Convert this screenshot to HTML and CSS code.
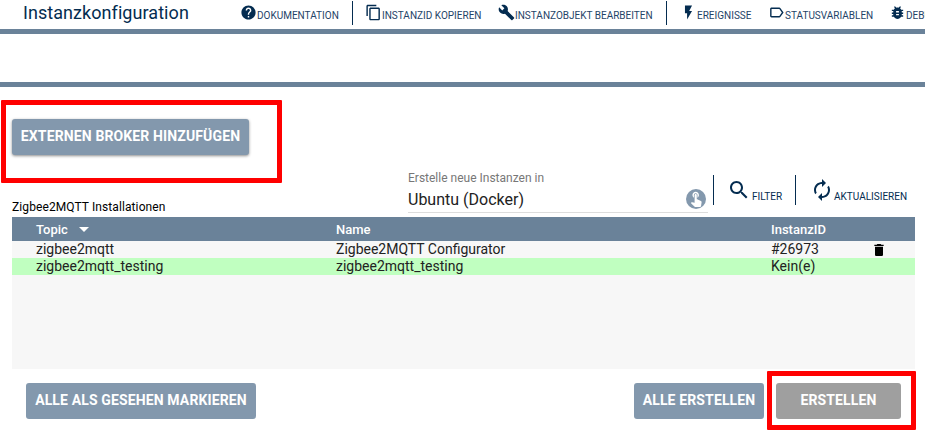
FILE: index.html
```html
<!DOCTYPE html>
<html lang="de">
<head>
<meta charset="utf-8">
<title>Instanzkonfiguration</title>
<link rel="stylesheet" href="styles.css">
</head>
<body>
<header class="topbar">
  <h1 class="title">Instanzkonfiguration</h1>
  <a class="tool"><svg class="icon" viewBox="0 0 24 24"><path d="M12 2C6.48 2 2 6.48 2 12s4.48 10 10 10 10-4.48 10-10S17.52 2 12 2zm1 17h-2v-2h2v2zm2.07-7.75l-.9.92C13.45 12.9 13 13.5 13 15h-2v-.5c0-1.1.45-2.1 1.17-2.83l1.24-1.26c.37-.36.59-.86.59-1.41 0-1.1-.9-2-2-2s-2 .9-2 2H8c0-2.21 1.79-4 4-4s4 1.79 4 4c0 .88-.36 1.68-.93 2.25z"/></svg><span class="caption">DOKUMENTATION</span></a>
  <span class="divider"></span>
  <a class="tool"><svg class="icon" viewBox="0 0 24 24"><path d="M16 1H4c-1.1 0-2 .9-2 2v14h2V3h12V1zm3 4H8c-1.1 0-2 .9-2 2v14c0 1.1.9 2 2 2h11c1.1 0 2-.9 2-2V7c0-1.1-.9-2-2-2zm0 16H8V7h11v14z"/></svg><span class="caption">INSTANZID KOPIEREN</span></a>
  <a class="tool"><svg class="icon" viewBox="0 0 24 24"><path d="M22.7 19l-9.1-9.1c.9-2.3.4-5-1.5-6.9-2-2-5-2.4-7.4-1.3L9 6 6 9 1.6 4.7C.4 7.1.9 10.1 2.9 12.1c1.9 1.9 4.6 2.4 6.9 1.5l9.1 9.1c.4.4 1 .4 1.4 0l2.3-2.3c.5-.4.5-1.1.1-1.4z"/></svg><span class="caption">INSTANZOBJEKT BEARBEITEN</span></a>
  <span class="divider"></span>
  <a class="tool"><svg class="icon" viewBox="0 0 24 24"><path d="M7 2v11h3v9l7-12h-4l4-8z"/></svg><span class="caption">EREIGNISSE</span></a>
  <a class="tool"><svg class="icon" viewBox="0 0 24 24"><path d="M17.63 5.84C17.27 5.33 16.67 5 16 5L5 5.01C3.9 5.01 3 5.9 3 7v10c0 1.1.9 1.99 2 1.99L16 19c.67 0 1.27-.33 1.63-.84L22 12l-4.37-6.16zM16 17H5V7h11l3.55 5L16 17z"/></svg><span class="caption">STATUSVARIABLEN</span></a>
  <a class="tool"><svg class="icon" viewBox="0 0 24 24"><path d="M20 8h-2.81c-.45-.78-1.07-1.45-1.82-1.96L17 4.41 15.59 3l-2.17 2.17C12.96 5.06 12.49 5 12 5c-.49 0-.96.06-1.41.17L8.41 3 7 4.41l1.62 1.63C7.88 6.55 7.26 7.22 6.81 8H4v2h2.09c-.05.33-.09.66-.09 1v1H4v2h2v1c0 .34.04.67.09 1H4v2h2.81c1.04 1.79 2.97 3 5.19 3s4.15-1.21 5.19-3H20v-2h-2.09c.05-.33.09-.66.09-1v-1h2v-2h-2v-1c0-.34-.04-.67-.09-1H20V8zm-6 8h-4v-2h4v2zm0-4h-4v-2h4v2z"/></svg><span class="caption">DEBUG</span></a>
</header>
<div class="strip"></div>
<main class="content">
  <div class="broker-row">
    <button class="btn raised">EXTERNEN BROKER HINZUFÜGEN</button>
    <span class="mark mark-broker"></span>
  </div>
  <div class="list-head">
    <span class="list-title">Zigbee2MQTT Installationen</span>
    <div class="select">
      <span class="select-label">Erstelle neue Instanzen in</span>
      <div class="select-value"><span>Ubuntu (Docker)</span><svg class="touch" viewBox="0 0 20 20"><circle cx="10" cy="10" r="10"/><path transform="translate(1.4 .6) scale(.72)" d="M9 11.24V7.5C9 6.12 10.12 5 11.5 5S14 6.12 14 7.5v3.74c1.21-.81 2-2.18 2-3.74C16 5.01 13.99 3 11.5 3S7 5.01 7 7.5c0 1.56.79 2.93 2 3.74zm9.84 4.63l-4.54-2.26c-.17-.07-.35-.11-.54-.11H13v-6c0-.83-.67-1.5-1.5-1.5S10 6.67 10 7.5v10.74l-3.43-.72c-.08-.01-.15-.03-.24-.03-.31 0-.59.13-.79.33l-.79.8 4.94 4.94c.27.27.65.44 1.06.44h6.79c.75 0 1.33-.55 1.44-1.28l.75-5.27c.01-.07.02-.14.02-.2 0-.62-.38-1.16-.91-1.38z"/></svg></div>
    </div>
    <a class="action filter"><svg viewBox="0 0 24 24"><path d="M15.5 14h-.79l-.28-.27C15.41 12.59 16 11.11 16 9.5 16 5.91 13.09 3 9.5 3S3 5.91 3 9.5 5.91 16 9.5 16c1.61 0 3.09-.59 4.23-1.57l.27.28v.79l5 4.99L20.49 19l-4.99-5zm-6 0C7.01 14 5 11.99 5 9.5S7.01 5 9.5 5 14 7.01 14 9.5 11.99 14 9.5 14z"/></svg><span class="action-text">FILTER</span></a>
    <a class="action refresh"><svg viewBox="0 0 24 24"><path d="M12 6v3l4-4-4-4v3c-4.42 0-8 3.58-8 8 0 1.57.46 3.03 1.24 4.26L6.7 14.8c-.45-.83-.7-1.79-.7-2.8 0-3.31 2.69-6 6-6zm6.76 1.74L17.3 9.2c.44.84.7 1.79.7 2.8 0 3.31-2.69 6-6 6v-3l-4 4 4 4v-3c4.42 0 8-3.58 8-8 0-1.57-.46-3.03-1.24-4.26z"/></svg><span class="action-text">AKTUALISIEREN</span></a>
  </div>
  <section class="table">
    <div class="row head"><span>Topic<i class="sort"></i></span><span>Name</span><span>InstanzID</span></div>
    <div class="row"><span>zigbee2mqtt</span><span>Zigbee2MQTT Configurator</span><span>#26973</span><svg class="trash" viewBox="0 0 24 24"><path d="M6 19c0 1.1.9 2 2 2h8c1.1 0 2-.9 2-2V7H6v12zM19 4h-3.5l-1-1h-5l-1 1H5v2h14V4z"/></svg></div>
    <div class="row new"><span>zigbee2mqtt_testing</span><span>zigbee2mqtt_testing</span><span>Kein(e)</span></div>
  </section>
  <footer class="buttons">
    <button class="btn seen">ALLE ALS GESEHEN MARKIEREN</button>
    <button class="btn all">ALLE ERSTELLEN</button>
    <div class="create"><button class="btn disabled">ERSTELLEN</button><span class="mark mark-create"></span></div>
  </footer>
</main>
</body>
</html>
```
FILE: styles.css
```css
* { box-sizing: border-box; }
body {
  margin: 0;
  width: 925px;
  height: 437px;
  overflow: hidden;
  background: #fff;
  color: #222;
  font-family: Roboto, sans-serif;
}
svg { display: block; flex: none; }
span { white-space: nowrap; }
.topbar {
  display: grid;
  grid-template-columns: 217px 112px 13px 133px 168px 14px 88px 121px 60px;
  height: 34px;
  padding-left: 23px;
  border-bottom: 5px solid #6a8299;
  overflow: hidden;
}
.title {
  margin: 0;
  color: #042c50;
  font-size: 18px;
  font-weight: 400;
  line-height: 26px;
  letter-spacing: .06px;
}
.tool { display: flex; padding-top: 4px; color: #1f4468; }
.icon { width: 17px; height: 17px; fill: #042c50; }
.caption { font-size: 10px; line-height: 14px; padding-top: 5px; }
.divider { width: 1px; height: 24px; margin-top: 1px; background: #042c50; }
.strip { height: 53px; border-bottom: 5px solid #6a8299; }
.content { padding: 32px 10px 0 12px; }
.btn {
  display: block;
  height: 36px;
  padding: 0 0 1px;
  border: 0;
  border-radius: 3px;
  background: #8398ad;
  color: #fff;
  font: 700 14px/33px Roboto, sans-serif;
  letter-spacing: .13px;
  white-space: nowrap;
}
.broker-row { position: relative; height: 54px; }
.raised { width: 237px; box-shadow: 0 1px 3px rgba(0, 0, 0, .45); }
.mark { position: absolute; border: 5px solid #f00; border-radius: 1px; }
.mark-broker { left: -11px; top: -19px; width: 281px; height: 83px; }
.list-head {
  display: grid;
  grid-template-columns: 396px 305px 82px 1fr;
  height: 44px;
}
.list-title { align-self: end; color: #000; font-size: 12px; line-height: 20px; letter-spacing: .1px; }
.select { width: 300px; height: 40px; border-bottom: 1px solid #ddd; }
.select-label { display: block; color: #777; font-size: 12px; line-height: 10px; }
.select-value {
  display: flex;
  justify-content: space-between;
  height: 26px;
  padding-right: 2px;
  font-size: 16px;
  line-height: 33px;
}
.touch { width: 20px; height: 20px; margin-top: 6px; fill: #8398ad; }
.touch path { fill: #fff; }
.action { display: flex; height: 30px; margin-top: 2px; border-left: 1px solid #042c50; color: #042c50; }
.action svg { width: 24px; height: 24px; margin: 3px 1px 0 13px; fill: #042c50; }
.refresh svg { margin-left: 14px; margin-right: 0; }
.action-text { font-size: 10px; line-height: 14px; padding-top: 15px; }
.table { width: 903px; height: 152px; background: #f7f7f7; }
.row {
  display: grid;
  grid-template-columns: 300px 435px 101px 1fr;
  height: 17px;
  padding-left: 24px;
  font-size: 14px;
  line-height: 17px;
}
.head { height: 24px; background: #6a8299; color: #fff; font-weight: 500; font-size: 13px; line-height: 25px; }
.sort {
  display: inline-block;
  margin-left: 11px;
  border: 5px solid transparent;
  border-top-color: #fff;
  border-bottom: 0;
  vertical-align: 2px;
}
.new { background: #c0ffc0; }
.trash { width: 16px; height: 16px; margin: 1px 0 0 -1px; fill: #000; }
.buttons { display: flex; padding: 14px 0 0 14px; }
.seen { width: 230px; }
.all { width: 130px; margin-left: 378px; }
.create { position: relative; margin-left: 12px; }
.disabled { width: 125px; background: #9f9f9f; }
.mark-create { left: -9px; top: -12px; width: 149px; height: 59px; }
```
